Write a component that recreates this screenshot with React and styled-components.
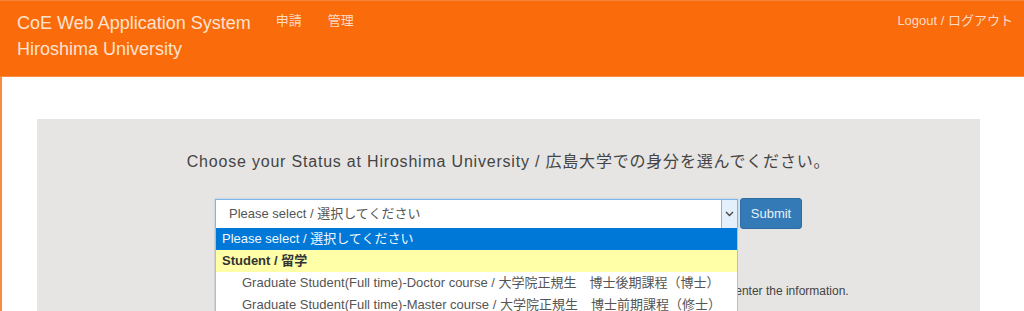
import React from "react";
import styled, { createGlobalStyle } from "styled-components";

const fontStack = `"Liberation Sans", Arial, "Noto Sans CJK JP", sans-serif`;

const options = [
  { label: "Please select / 選択してください", kind: "selected" },
  { label: "Student / 留学", kind: "group" },
  {
    label: "Graduate Student(Full time)-Doctor course / 大学院正規生　博士後期課程（博士）",
    kind: "item",
  },
  {
    label: "Graduate Student(Full time)-Master course / 大学院正規生　博士前期課程（修士）",
    kind: "item",
  },
];

export default function App() {
  return (
    <>
      <GlobalStyle />
      <Header>
        <Brand>
          CoE Web Application System
          <br />
          Hiroshima University
        </Brand>
        <Nav>
          <NavLink href="#">申請</NavLink>
          <NavLink href="#">管理</NavLink>
        </Nav>
        <Logout href="#">Logout / ログアウト</Logout>
      </Header>
      <Body>
        <Panel>
          <Title>
            Choose your Status at Hiroshima University / 広島大学での身分を選んでください。
          </Title>
          <FormRow>
            <SelectBox>
              <SelectValue>Please select / 選択してください</SelectValue>
              <Arrow>
                <svg width="9" height="6" viewBox="0 0 9 6">
                  <path d="M1 1l3.5 3.5L8 1" fill="none" stroke="#444" strokeWidth="1.3" />
                </svg>
              </Arrow>
              <Dropdown>
                {options.map((o) => (
                  <Option key={o.label} kind={o.kind}>
                    {o.label}
                  </Option>
                ))}
              </Dropdown>
            </SelectBox>
            <SubmitButton>Submit</SubmitButton>
          </FormRow>
          <Notice>
            After choosing your status from the list above, press the Submit button to go to the form and enter the information.
          </Notice>
        </Panel>
      </Body>
    </>
  );
}

const GlobalStyle = createGlobalStyle`
  body {
    margin: 0;
    font-family: ${fontStack};
    background: #fff;
    overflow: hidden;
  }
`;

const Header = styled.header`
  display: flex;
  align-items: flex-start;
  height: 75px;
  padding: 0 11px 0 17px;
  background: #fa6b0c;
  border-top: 1px solid #f5843a;
  border-bottom: 1px solid #fb8a45;
`;
const Brand = styled.div`
  padding-top: 9px;
  font-size: 18px;
  line-height: 26px;
  color: #fde3d0;
`;
const Nav = styled.nav`
  display: flex;
  gap: 26px;
  margin-left: 25px;
  padding-top: 11px;
`;
const NavLink = styled.a`
  font-size: 13px;
  line-height: 18px;
  color: #fcdac3;
  text-decoration: none;
`;
const Logout = styled(NavLink)`
  margin-left: auto;
  padding-top: 11px;
`;
const Body = styled.main`
  min-height: 240px;
  padding: 42px 44px 0 35px;
  border-left: 2px solid #f98a40;
`;
const Panel = styled.section`
  background: #e6e5e3;
  padding: 33px 0 40px;
  text-align: center;
`;
const Title = styled.h2`
  margin: 0;
  font-size: 16px;
  font-weight: normal;
  line-height: 20px;
  letter-spacing: 0.8px;
  color: #444;
`;
const FormRow = styled.div`
  display: flex;
  justify-content: center;
  align-items: flex-start;
  gap: 2px;
  margin-top: 26px;
`;
const SelectBox = styled.div`
  position: relative;
  display: flex;
  width: 523px;
  height: 30px;
  box-sizing: border-box;
  margin-top: 1px;
  background: #fff;
  border: 1px solid #7fb6ea;
  box-shadow: 0 0 2px rgba(102, 175, 233, 0.6);
`;
const SelectValue = styled.div`
  flex: 1;
  padding-left: 13px;
  font-size: 13px;
  line-height: 28px;
  text-align: left;
  color: #555;
`;
const Arrow = styled.div`
  display: flex;
  align-items: center;
  justify-content: center;
  width: 15px;
  background: #e3effa;
  border-left: 1px solid #7fb6ea;
`;
const Dropdown = styled.ul`
  position: absolute;
  top: 28px;
  left: -1px;
  width: 523px;
  margin: 0;
  padding: 0;
  list-style: none;
  box-sizing: border-box;
  background: #fff;
  border: 1px solid #bdbdbd;
  border-top: none;
  box-shadow: -1px 0 0 #d0d0d0;
  z-index: 2;
`;
const Option = styled.li`
  height: 22px;
  padding-left: ${(p) => (p.kind === "item" ? "26px" : "6px")};
  font-size: 13px;
  line-height: 22px;
  text-align: left;
  white-space: nowrap;
  font-weight: ${(p) => (p.kind === "group" ? "bold" : "normal")};
  color: ${(p) => (p.kind === "selected" ? "#f2f7fd" : p.kind === "group" ? "#333" : "#555")};
  background: ${(p) =>
    p.kind === "selected" ? "#0078d7" : p.kind === "group" ? "#ffffa8" : "#fff"};
`;
const SubmitButton = styled.button`
  width: 62px;
  height: 31px;
  padding: 0;
  font-family: ${fontStack};
  font-size: 13px;
  color: #e8f0f8;
  background: #337ab7;
  border: 1px solid #2e6da4;
  border-radius: 3px;
`;
const Notice = styled.p`
  margin: 55px 0 0;
  font-size: 12px;
  color: #444;
  padding-left: 76px;
`;
